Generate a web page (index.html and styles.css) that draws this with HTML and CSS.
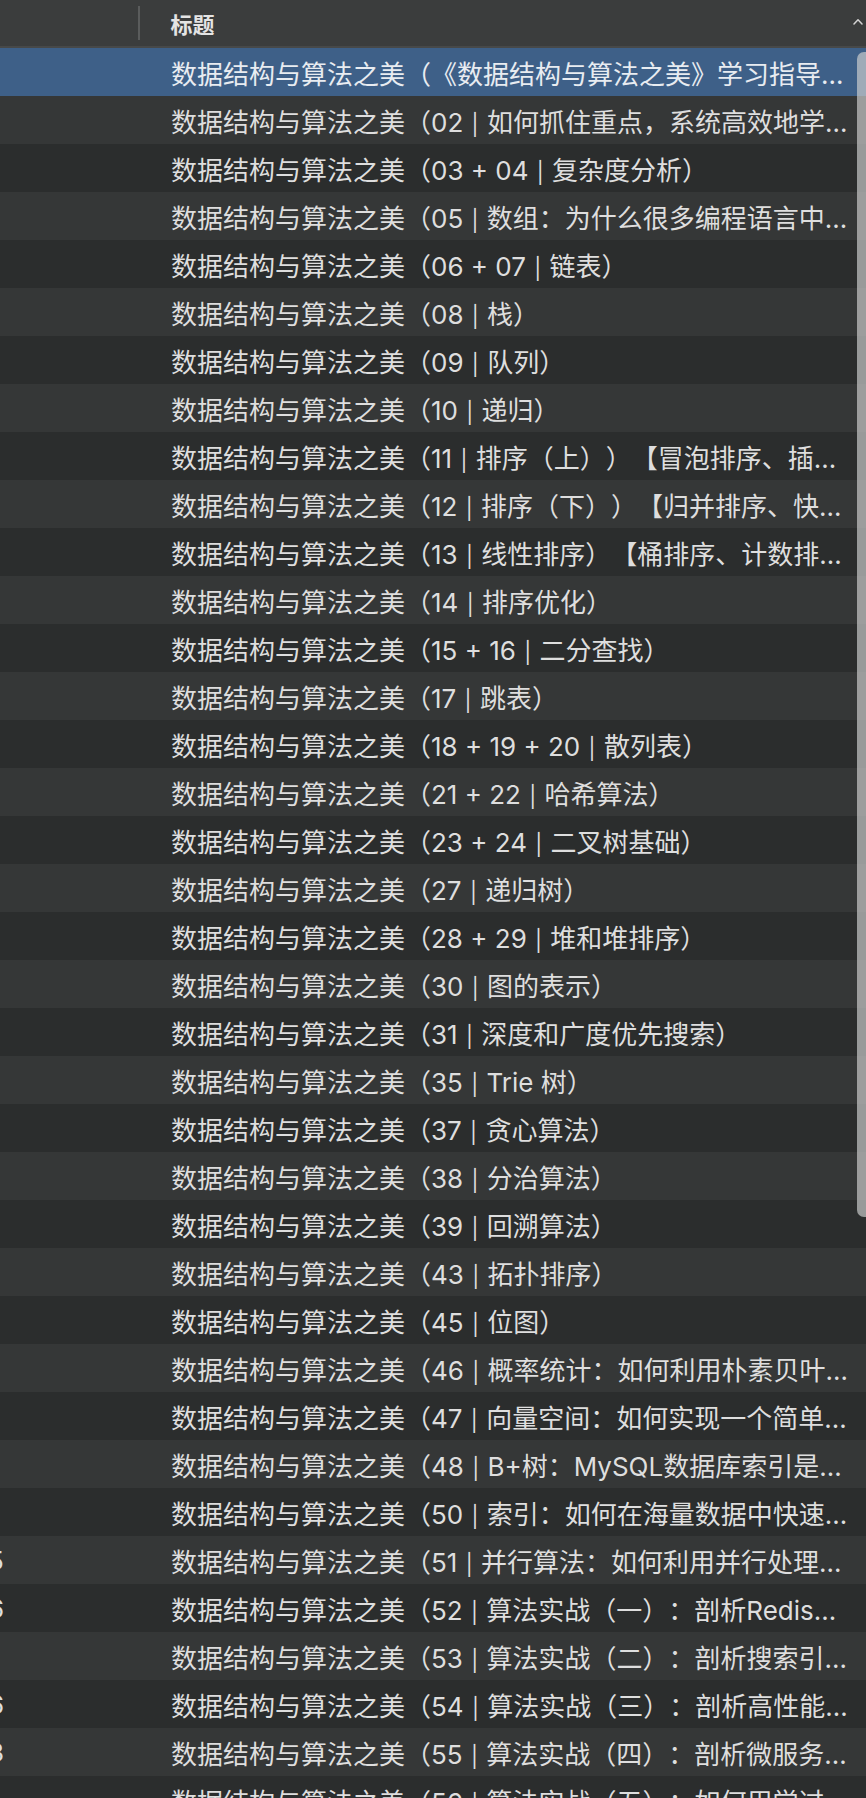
FILE: index.html
```html
<!DOCTYPE html>
<html lang="zh-CN">
<head>
<meta charset="utf-8">
<title>标题</title>
<link rel="stylesheet" href="styles.css">
</head>
<body>
<div class="table">
  <div class="header">
    <div class="hcell-first"></div>
    <div class="hdivider"></div>
    <div class="hcell-title">标题</div>
    <svg class="sort" width="10" height="7" viewBox="0 0 10 7"><path d="M1 6 L5 1.8 L9 6" fill="none" stroke="#d2d2d2" stroke-width="1.5" stroke-linecap="round" stroke-linejoin="round"/></svg>
  </div>
  <div class="rows">
    <div class="row selected"><div class="c1"></div><div class="c2">数据结构与算法之美（《数据结构与算法之美》学习指导手册）</div></div>
    <div class="row"><div class="c1"></div><div class="c2">数据结构与算法之美（02 <span class="pipe">|</span> 如何抓住重点，系统高效地学习数据结构与算法？）</div></div>
    <div class="row"><div class="c1"></div><div class="c2">数据结构与算法之美（03 + 04 <span class="pipe">|</span> 复杂度分析）</div></div>
    <div class="row"><div class="c1"></div><div class="c2">数据结构与算法之美（05 <span class="pipe">|</span> 数组：为什么很多编程语言中数组都从0开始编号？）</div></div>
    <div class="row"><div class="c1"></div><div class="c2">数据结构与算法之美（06 + 07 <span class="pipe">|</span> 链表）</div></div>
    <div class="row"><div class="c1"></div><div class="c2">数据结构与算法之美（08 <span class="pipe">|</span> 栈）</div></div>
    <div class="row"><div class="c1"></div><div class="c2">数据结构与算法之美（09 <span class="pipe">|</span> 队列）</div></div>
    <div class="row"><div class="c1"></div><div class="c2">数据结构与算法之美（10 <span class="pipe">|</span> 递归）</div></div>
    <div class="row"><div class="c1"></div><div class="c2">数据结构与算法之美（11 <span class="pipe">|</span> 排序（上））【冒泡排序、插入排序、选择排序】</div></div>
    <div class="row"><div class="c1"></div><div class="c2">数据结构与算法之美（12 <span class="pipe">|</span> 排序（下））【归并排序、快速排序】</div></div>
    <div class="row"><div class="c1"></div><div class="c2">数据结构与算法之美（13 <span class="pipe">|</span> 线性排序）【桶排序、计数排序、基数排序】</div></div>
    <div class="row"><div class="c1"></div><div class="c2">数据结构与算法之美（14 <span class="pipe">|</span> 排序优化）</div></div>
    <div class="row"><div class="c1"></div><div class="c2">数据结构与算法之美（15 + 16 <span class="pipe">|</span> 二分查找）</div></div>
    <div class="row"><div class="c1"></div><div class="c2">数据结构与算法之美（17 <span class="pipe">|</span> 跳表）</div></div>
    <div class="row"><div class="c1"></div><div class="c2">数据结构与算法之美（18 + 19 + 20 <span class="pipe">|</span> 散列表）</div></div>
    <div class="row"><div class="c1"></div><div class="c2">数据结构与算法之美（21 + 22 <span class="pipe">|</span> 哈希算法）</div></div>
    <div class="row"><div class="c1"></div><div class="c2">数据结构与算法之美（23 + 24 <span class="pipe">|</span> 二叉树基础）</div></div>
    <div class="row"><div class="c1"></div><div class="c2">数据结构与算法之美（27 <span class="pipe">|</span> 递归树）</div></div>
    <div class="row"><div class="c1"></div><div class="c2">数据结构与算法之美（28 + 29 <span class="pipe">|</span> 堆和堆排序）</div></div>
    <div class="row"><div class="c1"></div><div class="c2">数据结构与算法之美（30 <span class="pipe">|</span> 图的表示）</div></div>
    <div class="row"><div class="c1"></div><div class="c2">数据结构与算法之美（31 <span class="pipe">|</span> 深度和广度优先搜索）</div></div>
    <div class="row"><div class="c1"></div><div class="c2">数据结构与算法之美（35 <span class="pipe">|</span> Trie 树）</div></div>
    <div class="row"><div class="c1"></div><div class="c2">数据结构与算法之美（37 <span class="pipe">|</span> 贪心算法）</div></div>
    <div class="row"><div class="c1"></div><div class="c2">数据结构与算法之美（38 <span class="pipe">|</span> 分治算法）</div></div>
    <div class="row"><div class="c1"></div><div class="c2">数据结构与算法之美（39 <span class="pipe">|</span> 回溯算法）</div></div>
    <div class="row"><div class="c1"></div><div class="c2">数据结构与算法之美（43 <span class="pipe">|</span> 拓扑排序）</div></div>
    <div class="row"><div class="c1"></div><div class="c2">数据结构与算法之美（45 <span class="pipe">|</span> 位图）</div></div>
    <div class="row"><div class="c1"></div><div class="c2">数据结构与算法之美（46 <span class="pipe">|</span> 概率统计：如何利用朴素贝叶斯算法过滤垃圾短信？）</div></div>
    <div class="row"><div class="c1"></div><div class="c2">数据结构与算法之美（47 <span class="pipe">|</span> 向量空间：如何实现一个简单的音乐推荐系统？）</div></div>
    <div class="row"><div class="c1"></div><div class="c2">数据结构与算法之美（48 <span class="pipe">|</span> B+树：MySQL数据库索引是如何实现的？）</div></div>
    <div class="row"><div class="c1"></div><div class="c2">数据结构与算法之美（50 <span class="pipe">|</span> 索引：如何在海量数据中快速查找某个数据？）</div></div>
    <div class="row"><div class="c1"><span class="frag">5</span></div><div class="c2">数据结构与算法之美（51 <span class="pipe">|</span> 并行算法：如何利用并行处理提高算法的执行效率？）</div></div>
    <div class="row"><div class="c1"><span class="frag">6</span></div><div class="c2">数据结构与算法之美（52 <span class="pipe">|</span> 算法实战（一）：剖析Redis常用数据类型对应的数据结构）</div></div>
    <div class="row"><div class="c1"></div><div class="c2">数据结构与算法之美（53 <span class="pipe">|</span> 算法实战（二）：剖析搜索引擎背后的经典数据结构和算法）</div></div>
    <div class="row"><div class="c1"><span class="frag">6</span></div><div class="c2">数据结构与算法之美（54 <span class="pipe">|</span> 算法实战（三）：剖析高性能队列Disruptor背后的数据结构和算法）</div></div>
    <div class="row"><div class="c1"><span class="frag">3</span></div><div class="c2">数据结构与算法之美（55 <span class="pipe">|</span> 算法实战（四）：剖析微服务接口鉴权限流背后的数据结构和算法）</div></div>
    <div class="row"><div class="c1"></div><div class="c2">数据结构与算法之美（56 <span class="pipe">|</span> 算法实战（五）：如何用学过的数据结构和算法实现一个短网址系统？）</div></div>
  </div>
  <div class="scrollbar"></div>
</div>
</body>
</html>
```
FILE: styles.css
```css
html, body {
  margin: 0;
  padding: 0;
  height: 100%;
  overflow: hidden;
  background: #2b2d2d;
}
.table {
  position: relative;
  width: 866px;
  font-family: "Inter", "Noto Sans CJK SC", sans-serif;
  color: #dedede;
}
.header {
  display: flex;
  align-items: center;
  height: 46px;
  background: #3b3d3d;
  border-bottom: 2px solid #474949;
}
.hcell-first {
  width: 138px;
}
.hdivider {
  width: 1.5px;
  height: 34px;
  background: #5a5c5c;
}
.hcell-title {
  padding-left: 31px;
  font-size: 22px;
  font-weight: 700;
  color: #e4e4e4;
  flex: 1;
}
.sort {
  margin-right: 3px;
  margin-top: -4px;
}
.rows {
  display: flex;
  flex-direction: column;
}
.row {
  display: flex;
  align-items: center;
  height: 48px;
  background: #2b2d2d;
}
.row:nth-child(even) {
  background: #353737;
}
.row.selected {
  background: #3e6088;
  color: #e8ecf1;
}
.c1 {
  width: 171px;
  flex: none;
  overflow: hidden;
  white-space: nowrap;
}
.frag {
  display: inline-block;
  margin-left: -12px;
  font-size: 26px;
  color: #dedede;
}
.c2 {
  flex: 1;
  min-width: 0;
  padding-right: 9px;
  font-size: 26px;
  white-space: nowrap;
  overflow: hidden;
  text-overflow: ellipsis;
  text-spacing-trim: space-all;
}
.pipe {
  display: inline-block;
  font-size: 21px;
  line-height: 1;
  padding: 0 1px;
  vertical-align: 0;
}
.scrollbar {
  position: absolute;
  top: 52px;
  right: -8px;
  width: 17px;
  height: 1165px;
  border-radius: 7px;
  background: rgba(205, 207, 207, 0.68);
}
```
